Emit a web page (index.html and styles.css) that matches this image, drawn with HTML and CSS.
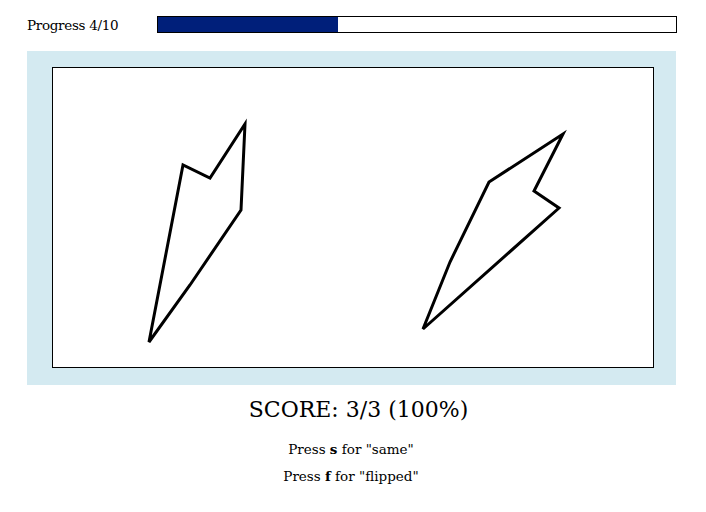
FILE: index.html
```html
<!DOCTYPE html>
<html>
<head>
<meta charset="utf-8">
<link rel="stylesheet" href="styles.css">
</head>
<body>
<div class="progress-row">
  <div class="progress-label">Progress 4/10</div>
  <div class="progress-bar"><div class="progress-fill" style="width:180px"></div></div>
</div>
<div class="panel">
  <div class="stage">
    <svg width="600" height="299" viewBox="0 0 600 299">
      <polygon points="96,274 130,97 157,110 192,56 188,142 137,217" fill="none" stroke="#000" stroke-width="3" stroke-linejoin="miter"/>
      <polygon points="370,261 397,194 436,114 510,66 481,123 506,140" fill="none" stroke="#000" stroke-width="3" stroke-linejoin="miter"/>
    </svg>
  </div>
</div>
<div class="score">SCORE: 3/3 (100%)</div>
<div class="hint">Press <b>s</b> for "same"</div>
<div class="hint">Press <b>f</b> for "flipped"</div>
</body>
</html>
```
FILE: styles.css
```css
html, body {
  margin: 0;
  padding: 0;
  background: #fff;
  font-family: "DejaVu Serif", "Liberation Serif", serif;
  color: #000;
}
.progress-row {
  display: flex;
  align-items: center;
  padding: 16px 0 0 27px;
  height: 17px;
}
.progress-label {
  width: 130px;
  font-size: 13.5px;
  letter-spacing: -0.3px;
}
.progress-bar {
  width: 518px;
  height: 15px;
  border: 1px solid #000;
  background: #fff;
}
.progress-fill {
  height: 100%;
  background: #001f7a;
}
.panel {
  margin: 18px 0 0 27px;
  width: 649px;
  box-sizing: border-box;
  padding: 16px 22px 17px 25px;
  background: #d4eaf1;
}
.stage {
  width: 600px;
  height: 299px;
  border: 1px solid #000;
  background: #fff;
}
.stage svg {
  display: block;
}
.score {
  width: 706px;
  text-align: center;
  font-size: 22px;
  margin-top: 12px;
  line-height: 26px;
  padding-left: 11px;
  box-sizing: border-box;
}
.hint {
  width: 706px;
  text-align: center;
  font-size: 13.5px;
  line-height: 27px;
  padding-right: 4px;
  box-sizing: border-box;
}
.score + .hint {
  margin-top: 13px;
}
```
